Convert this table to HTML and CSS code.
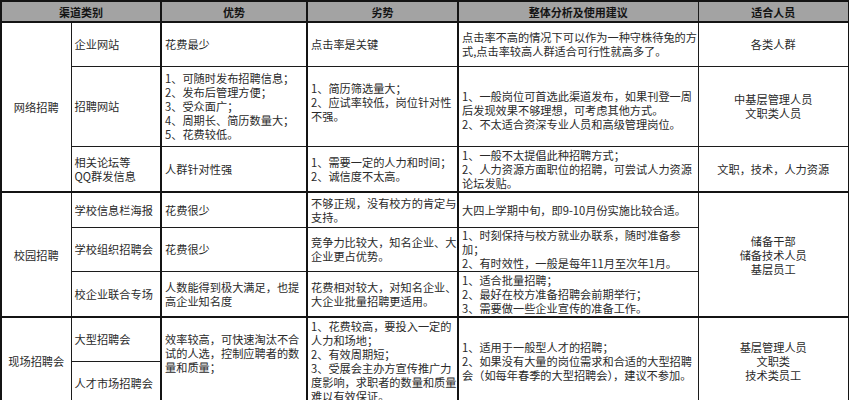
FILE: index.html
```html
<!DOCTYPE html>
<html lang="zh-CN">
<head>
<meta charset="utf-8">
<title>招聘渠道分析</title>
<link rel="stylesheet" href="styles.css">
</head>
<body>
<table class="sheet">
  <colgroup>
    <col class="c-group"><col class="c-sub"><col class="c-pro"><col class="c-con"><col class="c-advice"><col class="c-fit">
  </colgroup>
  <tr class="r-head">
    <th colspan="2" class="tk-r">渠道类别</th>
    <th class="tk-r">优势</th>
    <th class="tk-r">劣势</th>
    <th>整体分析及使用建议</th>
    <th>适合人员</th>
  </tr>

  <tr class="r-1">
    <td rowspan="3" class="grp">网络招聘</td>
    <td class="tk-r">企业网站</td>
    <td class="tk-r">花费最少</td>
    <td class="tk-r">点击率是关键</td>
    <td>点击率不高的情况下可以作为一种守株待兔的方<br>式,点击率较高人群适合可行性就高多了。</td>
    <td class="ctr">各类人群</td>
  </tr>
  <tr class="r-2">
    <td class="tk-r">招聘网站</td>
    <td class="tk-r">1、可随时发布招聘信息；<br>2、发布后管理方便；<br>3、受众面广；<br>4、周期长、简历数量大；<br>5、花费较低。</td>
    <td class="tk-r up4">1、简历筛选量大；<br>2、应试率较低，岗位针对性<br>不强。</td>
    <td class="dn4">1、一般岗位可首选此渠道发布，如果刊登一周<br>后发现效果不够理想，可考虑其他方式。<br>2、不太适合资深专业人员和高级管理岗位。</td>
    <td class="ctr">中基层管理人员<br>文职类人员</td>
  </tr>
  <tr class="r-3">
    <td class="tk-r">相关论坛等<br>QQ群发信息</td>
    <td class="tk-r">人群针对性强</td>
    <td class="tk-r">1、需要一定的人力和时间；<br>2、诚信度不太高。</td>
    <td>1、一般不太提倡此种招聘方式；<br>2、人力资源方面职位的招聘，可尝试人力资源<br>论坛发贴。</td>
    <td class="ctr">文职，技术，人力资源</td>
  </tr>

  <tr class="r-4 grp-top">
    <td rowspan="3" class="grp">校园招聘</td>
    <td class="tk-r">学校信息栏海报</td>
    <td class="tk-r">花费很少</td>
    <td class="tk-r">不够正规，没有校方的肯定与<br>支持。</td>
    <td>大四上学期中旬，即9-10月份实施比较合适。</td>
    <td rowspan="3" class="ctr">储备干部<br>储备技术人员<br>基层员工</td>
  </tr>
  <tr class="r-5">
    <td class="tk-r">学校组织招聘会</td>
    <td class="tk-r">花费很少</td>
    <td class="tk-r">竞争力比较大，知名企业、大<br>企业更占优势。</td>
    <td>1、时刻保持与校方就业办联系，随时准备参<br>加；<br>2、有时效性，一般是每年11月至次年1月。</td>
  </tr>
  <tr class="r-6">
    <td class="tk-r">校企业联合专场</td>
    <td class="tk-r">人数能得到极大满足，也提<br>高企业知名度</td>
    <td class="tk-r">花费相对较大，对知名企业、<br>大企业批量招聘更适用。</td>
    <td>1、适合批量招聘；<br>2、最好在校方准备招聘会前期举行；<br>3、需要做一些企业宣传的准备工作。</td>
  </tr>

  <tr class="r-7 grp-top">
    <td rowspan="2" class="grp">现场招聘会</td>
    <td class="tk-r">大型招聘会</td>
    <td rowspan="2" class="tk-r top">效率较高，可快速淘汰不合<br>试的人选，控制应聘者的数<br>量和质量；</td>
    <td rowspan="2" class="tk-r">1、花费较高，要投入一定的<br>人力和场地；<br>2、有效周期短；<br>3、受展会主办方宣传推广力<br>度影响，求职者的数量和质量<br>难以有效保证。</td>
    <td rowspan="2">1、适用于一般型人才的招聘；<br>2、如果没有大量的岗位需求和合适的大型招聘<br>会（如每年春季的大型招聘会），建议不参加。</td>
    <td rowspan="2" class="ctr">基层管理人员<br>文职类<br>技术类员工</td>
  </tr>
  <tr class="r-8">
    <td class="tk-r">人才市场招聘会</td>
  </tr>
</table>
</body>
</html>
```

FILE: styles.css
```css
html, body {
  margin: 0;
  padding: 0;
  background: #ffffff;
}

.sheet {
  border-collapse: collapse;
  table-layout: fixed;
  width: 848px;
  font-family: "Noto Sans CJK SC", "Noto Sans", sans-serif;
  font-size: 11.2px;
  line-height: 14px;
  color: #2a2a2a;
  border: 2px solid #141414;
}

.c-group { width: 70px; }
.c-sub { width: 90px; }
.c-pro { width: 146px; }
.c-con { width: 151px; }
.c-advice { width: 240px; }
.c-fit { width: 151px; }

.sheet th,
.sheet td {
  border: 1px solid #1c1c1c;
  padding: 0 2px 0 3px;
  vertical-align: middle;
  white-space: nowrap;
  overflow: hidden;
  text-align: left;
  font-weight: normal;
}

.sheet th {
  background: #a3a3a3;
  color: #141414;
  font-weight: bold;
  font-size: 11px;
  text-align: center;
  border-bottom: 2px solid #141414;
  padding: 0;
}

.sheet .tk-r { border-right: 2px solid #141414; }

.sheet .grp {
  text-align: center;
  padding: 0;
}

.sheet .ctr {
  text-align: center;
  padding: 0;
}

.sheet .top {
  vertical-align: top;
  padding-top: 14px;
}

.sheet .up4 { padding-bottom: 8px; }
.sheet .dn4 { padding-top: 8px; }

.grp-top > td { border-top: 2px solid #141414; }

.r-head { height: 21px; }
.r-1 { height: 44px; }
.r-2 { height: 80px; }
.r-3 { height: 46px; }
.r-4 { height: 35px; }
.r-5 { height: 44px; }
.r-6 { height: 46px; }
.r-7 { height: 44px; }
.r-8 { height: 44px; }
```
